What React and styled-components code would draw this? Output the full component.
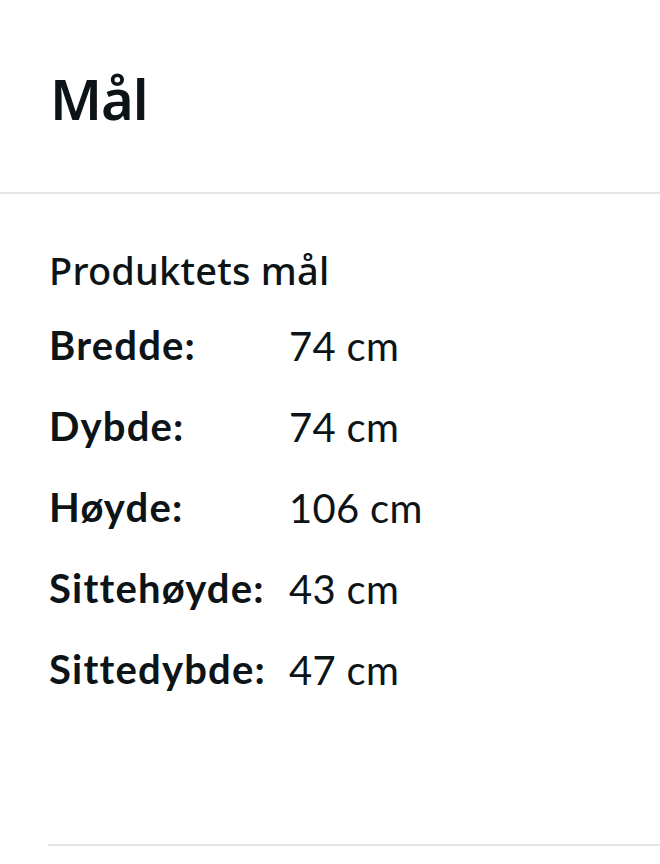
import React from "react";
import styled, { createGlobalStyle } from "styled-components";

const Global = createGlobalStyle`
  html, body { margin: 0; padding: 0; background: #fff; }
  body { font-family: Lato, "Noto Sans", sans-serif; color: #0d1417; }
`;

const Page = styled.div`
  width: 660px;
  height: 864px;
  overflow: hidden;
  display: flex;
  flex-direction: column;
`;

const Header = styled.header`
  height: 192px;
  box-sizing: border-box;
  padding: 64px 0 0 50px;
`;

const Title = styled.h1`
  margin: 0;
  font-family: "Noto Sans", Lato, sans-serif;
  font-weight: 600;
  font-size: 56px;
  line-height: 68px;
  letter-spacing: -1px;
`;

const Divider = styled.hr`
  margin: 0 0 0 ${(p) => p.$inset || 0}px;
  border: none;
  height: 2px;
  background: #e1e7e8;
`;

const Body = styled.section`
  padding: 48px 0 0 49px;
  height: 650px;
  box-sizing: border-box;
`;

const Subtitle = styled.h2`
  margin: 0 0 6px;
  font-family: "Noto Sans", Lato, sans-serif;
  font-weight: 500;
  font-size: 38px;
  line-height: 56px;
  letter-spacing: 0.2px;
`;

const Table = styled.dl`
  margin: 0;
  display: grid;
  grid-template-columns: 240px auto;
  grid-auto-rows: 81px;
  align-items: center;
`;

const Label = styled.dt`
  font-weight: 700;
  font-size: 40px;
  letter-spacing: 1.2px;
  margin: 0;
`;

const Value = styled.dd`
  font-weight: 400;
  font-size: 40px;
  letter-spacing: 0.3px;
  margin: 0;
  padding-top: 3px;
`;

const rows = [
  ["Bredde:", "74 cm"],
  ["Dybde:", "74 cm"],
  ["Høyde:", "106 cm"],
  ["Sittehøyde:", "43 cm"],
  ["Sittedybde:", "47 cm"],
];

export default function App() {
  return (
    <>
      <Global />
      <Page>
        <Header>
          <Title>Mål</Title>
        </Header>
        <Divider />
        <Body>
          <Subtitle>Produktets mål</Subtitle>
          <Table>
            {rows.map(([l, v]) => (
              <React.Fragment key={l}>
                <Label>{l}</Label>
                <Value>{v}</Value>
              </React.Fragment>
            ))}
          </Table>
        </Body>
        <Divider $inset={48} />
      </Page>
    </>
  );
}
